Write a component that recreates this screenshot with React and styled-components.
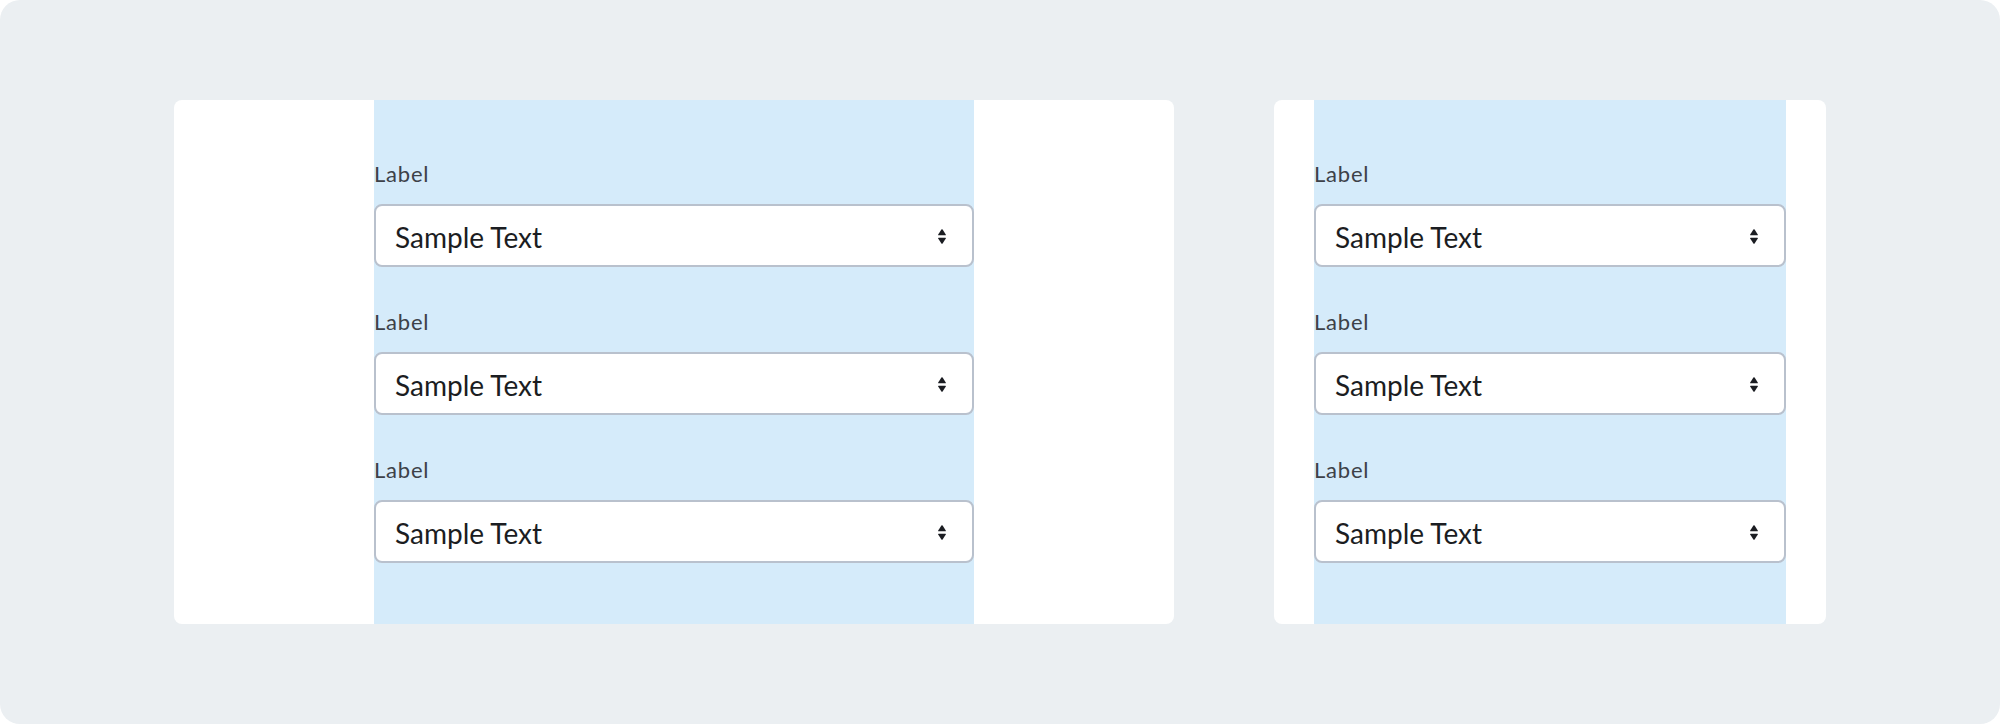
import React from 'react';
import styled, { createGlobalStyle } from 'styled-components';

const GlobalStyle = createGlobalStyle`
  html, body {
    margin: 0;
    padding: 0;
    background: #ffffff;
  }
  body {
    font-family: Lato, "Liberation Sans", sans-serif;
  }
`;

const Frame = styled.div`
  width: 2000px;
  height: 724px;
  box-sizing: border-box;
  background-color: #ebeff2;
  border-radius: 20px;
  display: flex;
  align-items: center;
  justify-content: center;
  gap: 100px;
`;

const Card = styled.div`
  width: ${(p) => p.width}px;
  height: 524px;
  box-sizing: border-box;
  padding: 0 ${(p) => p.inset}px;
  background-color: #ffffff;
  border-radius: 8px;
  display: flex;
  justify-content: center;
`;

const Column = styled.div`
  flex: 1;
  max-width: 600px;
  box-sizing: border-box;
  padding: 60px 0 0;
  background-color: #d5ebfa;
  display: flex;
  flex-direction: column;
  gap: 41px;
`;

const Field = styled.div`
  display: flex;
  flex-direction: column;
`;

const Label = styled.label`
  font-size: 22px;
  line-height: 28px;
  letter-spacing: 0.8px;
  color: #3d4148;
  margin-bottom: 16px;
`;

const SelectBox = styled.div`
  height: 63px;
  box-sizing: border-box;
  padding: 2px 26px 0 19px;
  background-color: #ffffff;
  border: 2px solid #b9c1cd;
  border-radius: 8px;
  display: flex;
  align-items: center;
  justify-content: space-between;
`;

const Value = styled.span`
  font-size: 28px;
  color: #1b1d22;
`;

// up / down sort arrows at the right end of the select
const SortIcon = () => (
  <svg width="8" height="15" viewBox="0 0 8 15" aria-hidden="true">
    <path d="M3.4 0.6 Q4 -0.1 4.6 0.6 L7.8 5.6 Q8 6.3 7.3 6.3 H0.7 Q0 6.3 0.2 5.6 Z" fill="#1b1d22" />
    <path d="M3.4 14.4 Q4 15.1 4.6 14.4 L7.8 9.4 Q8 8.7 7.3 8.7 H0.7 Q0 8.7 0.2 9.4 Z" fill="#1b1d22" />
  </svg>
);

const SelectField = () => (
  <Field>
    <Label>Label</Label>
    <SelectBox>
      <Value>Sample Text</Value>
      <SortIcon />
    </SelectBox>
  </Field>
);

const Panel = ({ width, inset }) => (
  <Card width={width} inset={inset}>
    <Column>
      <SelectField />
      <SelectField />
      <SelectField />
    </Column>
  </Card>
);

const App = () => (
  <>
    <GlobalStyle />
    <Frame>
      <Panel width={1000} inset={200} />
      <Panel width={552} inset={40} />
    </Frame>
  </>
);

export default App;
